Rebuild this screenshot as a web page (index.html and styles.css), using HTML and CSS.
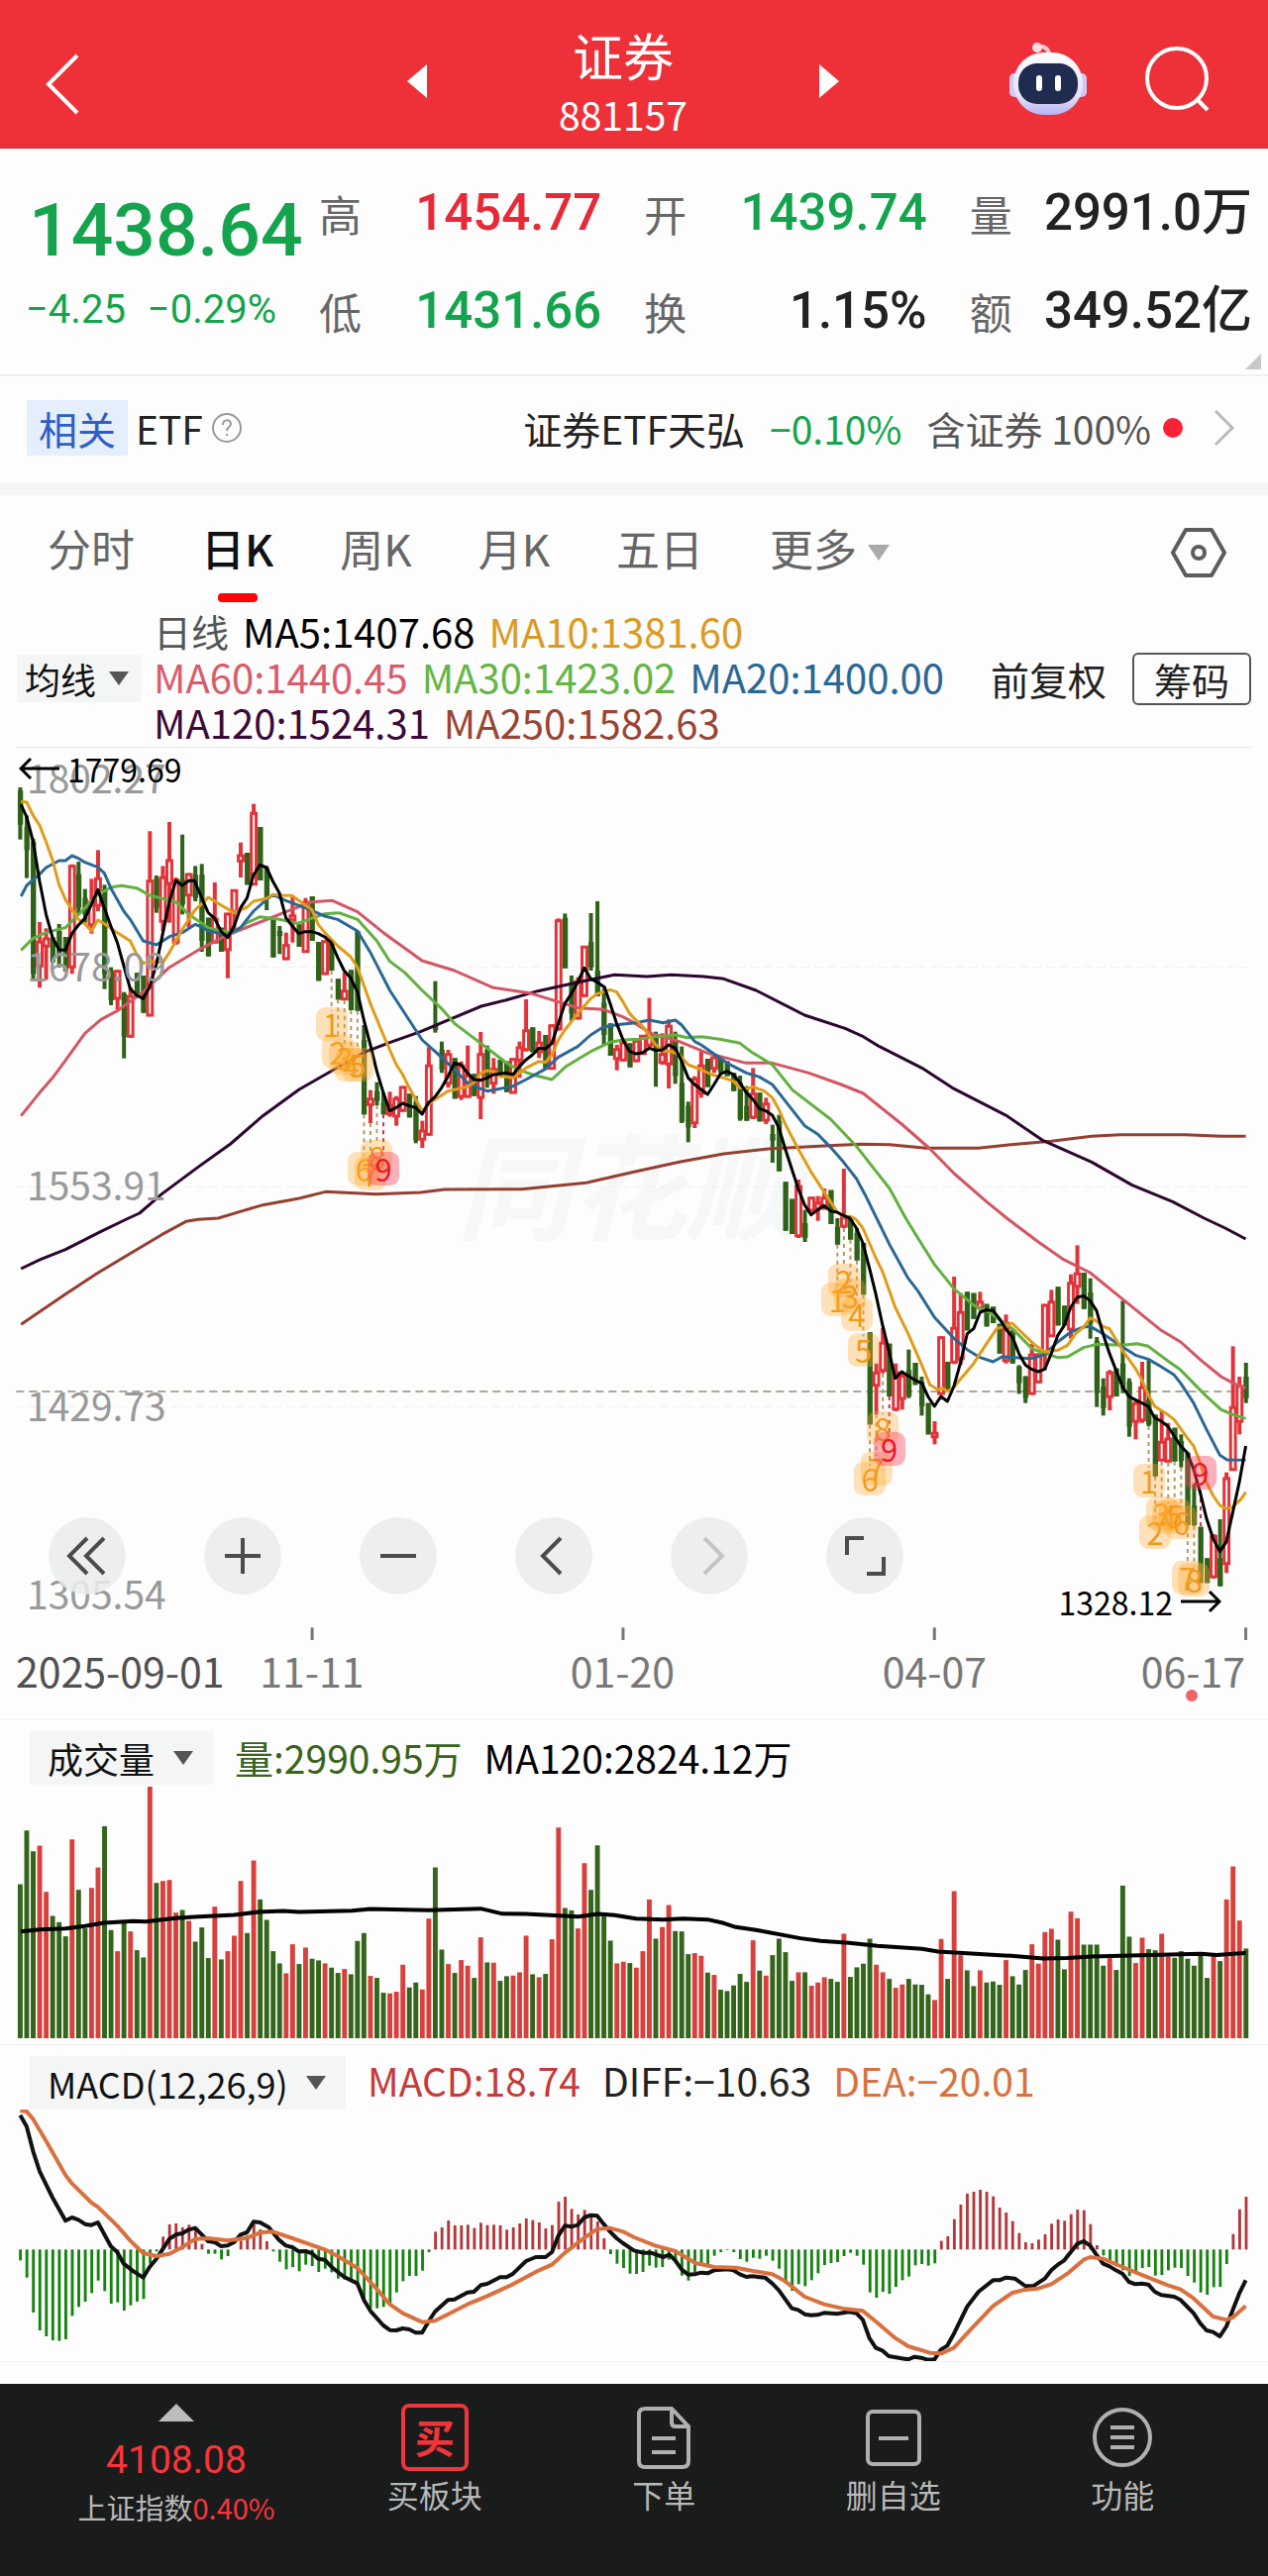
FILE: index.html
```html
<!DOCTYPE html>
<html lang="zh-CN">
<head>
    <meta charset="UTF-8">
    <meta name="viewport" content="width=device-width, initial-scale=1.0">
    <title>证券 881157</title>
    <link rel="stylesheet" href="styles.css">
</head>
<body>
    <header class="top-bar">
        <button class="icon-btn back" aria-label="返回">
            <svg width="44" height="70" viewBox="0 0 44 70"><path d="M42 7 L13 36 L42 65" fill="none" stroke="#fff" stroke-width="4"/></svg>
        </button>
        <div class="title-group">
            <button class="icon-btn" aria-label="上一个">
                <svg width="20" height="34" viewBox="0 0 20 34"><path d="M20 0V34L0 17Z" fill="#fff"/></svg>
            </button>
            <div class="title">
                <h1>证券</h1>
                <div class="code">881157</div>
            </div>
            <button class="icon-btn" aria-label="下一个">
                <svg width="20" height="34" viewBox="0 0 20 34"><path d="M0 0V34L20 17Z" fill="#fff"/></svg>
            </button>
        </div>
        <div class="top-actions">
            <button class="icon-btn" aria-label="智能助手">
                <svg width="80" height="76" viewBox="0 0 80 76">
                    <defs>
                        <linearGradient id="shell" x1="0" y1="0" x2="0" y2="1">
                            <stop offset="0" stop-color="#fff"/>
                            <stop offset=".7" stop-color="#e6e0fb"/>
                            <stop offset="1" stop-color="#b7b2f2"/>
                        </linearGradient>
                    </defs>
                    <path d="M41 14C41 7 36 4 29 5" fill="none" stroke="#f7c9d6" stroke-width="4"/>
                    <circle cx="29" cy="6" r="5" fill="#fbdde4"/>
                    <rect x="1" y="32" width="12" height="24" rx="5" fill="#cfc9f6"/>
                    <rect x="67" y="32" width="12" height="24" rx="5" fill="#cfc9f6"/>
                    <rect x="5" y="11" width="70" height="63" rx="31" fill="url(#shell)"/>
                    <rect x="10" y="22" width="60" height="41" rx="19" fill="#1f2c4f"/>
                    <rect x="28" y="34" width="6" height="16" rx="3" fill="#fff"/>
                    <rect x="47" y="34" width="6" height="16" rx="3" fill="#fff"/>
                </svg>
            </button>
            <button class="icon-btn" aria-label="搜索">
                <svg width="68" height="68" viewBox="0 0 68 68"><circle cx="34" cy="33" r="30" fill="none" stroke="#fff" stroke-width="4"/><path d="M54 54L65 65" stroke="#fff" stroke-width="4"/></svg>
            </button>
        </div>
    </header>

    <section class="quote">
        <div class="price-block">
            <div class="price">1438.64</div>
            <div class="change"><span>−4.25</span><span>−0.29%</span></div>
        </div>
        <dl class="stats">
            <div class="stat"><dt>高</dt><dd class="up">1454.77</dd></div>
            <div class="stat"><dt>开</dt><dd class="down">1439.74</dd></div>
            <div class="stat"><dt>量</dt><dd>2991.0万</dd></div>
            <div class="stat"><dt>低</dt><dd class="down">1431.66</dd></div>
            <div class="stat"><dt>换</dt><dd>1.15%</dd></div>
            <div class="stat"><dt>额</dt><dd>349.52亿</dd></div>
        </dl>
        <svg class="corner" width="16" height="16" viewBox="0 0 16 16"><path d="M16 0V16H0Z" fill="#c8c8c8"/></svg>
    </section>

    <a class="related" href="#etf">
        <span class="chip">相关</span>
        <span>ETF</span>
        <svg class="help" width="32" height="32" viewBox="0 0 32 32" fill="none" stroke="#999" stroke-width="2"><circle cx="16" cy="16" r="14"/><path d="M12 13C12 7 20 7 20 12C20 15 16 15 16 19M16 22V24"/></svg>
        <span class="etf-name">证券ETF天弘</span>
        <span class="etf-change down">−0.10%</span>
        <span class="etf-weight">含证券 100%</span>
        <i class="dot"></i>
        <svg class="more" width="22" height="38" viewBox="0 0 22 38"><path d="M2 2L19 19L2 36" fill="none" stroke="#bbb" stroke-width="3"/></svg>
    </a>

    <nav class="tabs">
        <button>分时</button>
        <button class="active">日K</button>
        <button>周K</button>
        <button>月K</button>
        <button>五日</button>
        <button>更多<svg width="22" height="16" viewBox="0 0 22 16"><path d="M0 0H22L11 16Z" fill="#aaa"/></svg></button>
        <button class="settings" aria-label="设置">
            <svg width="56" height="50" viewBox="0 0 56 50" fill="none" stroke="#5c5c5c" stroke-width="4"><path d="M15 2H41L54 25L41 48H15L2 25Z" stroke-linejoin="round"/><circle cx="28" cy="25" r="6"/></svg>
        </button>
    </nav>

    <section class="ma-row">
        <label class="picker">
            <select aria-label="主图指标"><option>均线</option></select>
            <svg width="20" height="14" viewBox="0 0 20 14"><path d="M0 0H20L10 14Z" fill="#555"/></svg>
        </label>
        <div class="legend">
            <span class="period">日线</span>
            <span class="ma5">MA5:1407.68</span>
            <span class="ma10">MA10:1381.60</span>
            <span class="ma60">MA60:1440.45</span>
            <span class="ma30">MA30:1423.02</span>
            <span class="ma20">MA20:1400.00</span>
            <span class="ma120">MA120:1524.31</span>
            <span class="ma250">MA250:1582.63</span>
        </div>
        <button class="adjust">前复权</button>
        <button class="chips">筹码</button>
    </section>

    <section class="price-chart">
        <div class="watermark">同花顺</div>
        <svg class="plot" id="price-plot" viewBox="0 12 3136 2706" preserveAspectRatio="none"></svg>
        <div class="markers" id="markers"></div>
        <span class="scale s1">1802.27</span>
        <span class="scale s2">1678.09</span>
        <span class="scale s3">1553.91</span>
        <span class="scale s4">1429.73</span>
        <span class="scale s5">1305.54</span>
        <span class="extreme high"><svg width="41" height="24" viewBox="0 0 41 24"><path d="M41 12H2M12 2L2 12L12 22" fill="none" stroke="#000" stroke-width="3"/></svg>1779.69</span>
        <span class="extreme low">1328.12<svg width="41" height="24" viewBox="0 0 41 24"><path d="M0 12H39M29 2L39 12L29 22" fill="none" stroke="#000" stroke-width="3"/></svg></span>
        <div class="chart-tools">
            <button aria-label="快速后退"><svg viewBox="0 0 78 78"><path d="M39 21L21 39L39 57M56 21L38 39L56 57"/></svg></button>
            <button aria-label="放大"><svg viewBox="0 0 78 78"><path d="M39 21V57M21 39H57"/></svg></button>
            <button aria-label="缩小"><svg viewBox="0 0 78 78"><path d="M21 39H57"/></svg></button>
            <button aria-label="左移"><svg viewBox="0 0 78 78"><path d="M46 21L28 39L46 57"/></svg></button>
            <button aria-label="右移" disabled><svg viewBox="0 0 78 78"><path d="M34 21L52 39L34 57"/></svg></button>
            <button aria-label="全屏"><svg viewBox="0 0 78 78"><path d="M21 38V21H38M41 57H58V40"/></svg></button>
        </div>
    </section>
    <div class="dates">
        <span class="first">2025-09-01</span>
        <span class="d1">11-11</span>
        <span class="d2">01-20</span>
        <span class="d3">04-07</span>
        <span class="last">06-17</span>
        <i class="event"></i>
    </div>

    <section class="sub-chart">
        <div class="sub-head">
            <label class="picker">
                <select aria-label="副图指标一"><option>成交量</option></select>
                <svg width="20" height="14" viewBox="0 0 20 14"><path d="M0 0H20L10 14Z" fill="#555"/></svg>
            </label>
            <span class="vol">量:2990.95万</span>
            <span class="ma5">MA120:2824.12万</span>
        </div>
        <svg class="plot" id="volume-plot" viewBox="0 216 3136 769" preserveAspectRatio="none"></svg>
    </section>

    <section class="sub-chart macd">
        <div class="sub-head">
            <label class="picker">
                <select aria-label="副图指标二"><option>MACD(12,26,9)</option></select>
                <svg width="20" height="14" viewBox="0 0 20 14"><path d="M0 0H20L10 14Z" fill="#555"/></svg>
            </label>
            <span class="macd-value">MACD:18.74</span>
            <span class="diff">DIFF:−10.63</span>
            <span class="dea">DEA:−20.01</span>
        </div>
        <svg class="plot" id="macd-plot" viewBox="0 213 3136 762" preserveAspectRatio="none"></svg>
    </section>

    <footer class="bottom-bar">
        <button class="index">
            <svg width="36" height="18" viewBox="0 0 36 18"><path d="M18 0L36 18H0Z" fill="#bdbdbd"/></svg>
            <span class="index-value">4108.08</span>
            <span class="index-name">上证指数<b>0.40%</b></span>
        </button>
        <button class="item buy">
            <span class="buy-icon">买</span>
            <span>买板块</span>
        </button>
        <button class="item">
            <svg width="68" height="68" viewBox="0 0 68 68" fill="none" stroke="#b0b0b0" stroke-width="4"><path d="M14 5H42L59 23V58Q59 64 53 64H15Q9 64 9 58V11Q9 5 15 5M42 5V19Q42 23 46 23H59M22 35H46M22 49H46"/></svg>
            <span>下单</span>
        </button>
        <button class="item">
            <svg width="68" height="68" viewBox="0 0 68 68" fill="none" stroke="#b0b0b0" stroke-width="4"><rect x="8" y="8" width="52" height="53" rx="5"/><path d="M19 35H49"/></svg>
            <span>删自选</span>
        </button>
        <button class="item">
            <svg width="68" height="68" viewBox="0 0 68 68" fill="none" stroke="#b0b0b0" stroke-width="4"><circle cx="34" cy="34" r="28"/><path d="M22 24H46M22 34H46M22 44H46"/></svg>
            <span>功能</span>
        </button>
    </footer>

    <script src="charts.js"></script>
</body>
</html>
```
FILE: styles.css
```css
body {
    margin: 0;
    background: #fdfdfd;
    color: #222;
    font-family: "Noto Sans CJK SC", sans-serif;
}

button {
    margin: 0;
    padding: 0;
    border: 0;
    background: none;
    color: inherit;
    font: inherit;
}

svg {
    display: block;
    flex-shrink: 0;
}

.up {
    color: #e62a37;
}

.down {
    color: #14a44d;
}

/* header */
.top-bar {
    display: grid;
    grid-template-columns: 1fr auto 1fr;
    align-items: center;
    height: 150px;
    padding: 0 58px 0 36px;
    box-sizing: border-box;
    background: #ee3038;
    border-bottom: 1px solid #c8282f;
    color: #fff;
}

.back {
    justify-self: start;
    padding-top: 18px;
}

.title-group {
    display: flex;
    align-items: center;
    gap: 126px;
}

.title-group .icon-btn {
    padding-top: 14px;
}

.title {
    width: 144px;
    padding-top: 12px;
    text-align: center;
}

.title h1 {
    margin: 0;
    font-size: 51px;
    line-height: 68px;
    font-weight: 400;
}

.title .code {
    font-size: 39px;
    line-height: 52px;
}

.top-actions {
    display: flex;
    justify-self: end;
    align-items: center;
    gap: 56px;
    padding-top: 10px;
}

/* quote */
.quote {
    position: relative;
    display: flex;
    height: 230px;
    padding: 15px 16px 0 26px;
    box-sizing: border-box;
    border-bottom: 2px solid #eef0f0;
}

.price-block {
    width: 296px;
    flex-shrink: 0;
    padding-top: 27px;
    font-family: Roboto, "Noto Sans CJK SC", sans-serif;
    color: #14a44d;
    white-space: nowrap;
}

.price {
    padding-left: 3px;
    font-size: 75px;
    line-height: 80px;
    font-weight: 500;
}

.change {
    display: flex;
    gap: 22px;
    font-size: 40px;
    line-height: 82px;
}

.stats {
    display: grid;
    flex: 1;
    grid-template-columns: repeat(3, 1fr);
    grid-auto-rows: 99px;
    column-gap: 43px;
    margin: 0;
}

.stat {
    display: flex;
    justify-content: space-between;
    align-items: center;
    line-height: 94px;
    white-space: nowrap;
}

.stat dt {
    font-size: 43px;
    color: #666;
}

.stat dd {
    margin: 0;
    font-family: Roboto, "Noto Sans CJK SC", sans-serif;
    font-size: 51px;
    font-weight: 500;
}

.corner {
    position: absolute;
    right: 7px;
    bottom: 5px;
}

/* related ETF */
.related {
    display: flex;
    align-items: center;
    height: 120px;
    padding: 0 33px 4px 27px;
    box-sizing: border-box;
    border-bottom: 13px solid #f5f7f7;
    font-size: 39px;
    color: #222;
    text-decoration: none;
    white-space: nowrap;
}

.chip {
    margin-right: 8px;
    padding: 0 12px;
    background: #e5eefc;
    color: #2f5ec4;
    line-height: 56px;
}

.help {
    margin-left: 8px;
}

.etf-name {
    margin-left: auto;
}

.etf-change {
    margin: 0 25px;
}

.etf-weight {
    color: #555;
}

.dot {
    width: 20px;
    height: 20px;
    margin: 0 31px 0 12px;
    border-radius: 50%;
    background: #fb2236;
}

/* period tabs */
.tabs {
    display: flex;
    align-items: center;
    gap: 67px;
    height: 116px;
    padding: 0 42px 0 48px;
    font-size: 44px;
    line-height: 106px;
    color: #666;
}

.tabs button {
    position: relative;
    display: flex;
    align-items: flex-start;
    height: 100%;
    white-space: nowrap;
}

.tabs button svg {
    align-self: center;
    margin-left: 11px;
}

.tabs .active {
    color: #111;
    font-weight: 500;
}

.tabs .active::after {
    content: "";
    position: absolute;
    left: 50%;
    bottom: 8px;
    width: 40px;
    height: 9px;
    margin-left: -20px;
    border-radius: 4px;
    background: #fb0507;
}

.tabs .settings {
    margin-left: auto;
}

/* moving average legend */
.ma-row {
    display: flex;
    align-items: center;
    height: 138px;
    padding: 0 17px;
    white-space: nowrap;
}

.picker {
    display: flex;
    align-items: center;
    gap: 12px;
    height: 48px;
    padding: 0 12px 0 8px;
    background: #f4f6f6;
}

.picker select {
    padding: 0;
    border: 0;
    appearance: none;
    background: none;
    color: #111;
    font: inherit;
    font-size: 36px;
}

.legend {
    display: flex;
    flex: 1;
    flex-wrap: wrap;
    column-gap: 14px;
    margin: 0 14px 4px 13px;
    font-size: 40px;
    line-height: 46px;
}

.period {
    font-size: 38px;
    color: #555;
}

.ma5 { color: #000; }
.ma10 { color: #dc9a20; }
.ma20 { color: #2a6896; }
.ma30 { color: #66b545; }
.ma60 { color: #d95c6c; }
.ma120 { color: #3a0a38; }
.ma250 { color: #9a4434; }

.adjust {
    margin-right: 26px;
    font-size: 39px;
}

.chips {
    height: 53px;
    padding: 0 20px;
    border: 2px solid #555;
    border-radius: 6px;
    font-size: 38px;
    line-height: 49px;
}

/* charts */
.plot {
    position: relative;
    width: 100%;
}

.plot * {
    vector-effect: non-scaling-stroke;
}

.plot polyline {
    fill: none;
    stroke-width: 3px;
    stroke-linejoin: round;
}

.price-chart {
    position: relative;
    height: 902px;
    overflow: hidden;
}

.price-chart .plot {
    height: 902px;
}

.watermark {
    position: absolute;
    left: 36%;
    top: 354px;
    font-size: 116px;
    font-weight: 700;
    font-style: italic;
    color: #f6f8f8;
}

.scale {
    position: absolute;
    left: 27px;
    font-size: 39px;
    line-height: 40px;
    color: #999;
}

.s1 { top: 10px; }
.s2 { top: 200px; }
.s3 { top: 421px; }
.s4 { top: 644px; }
.s5 { top: 834px; }

.extreme {
    position: absolute;
    display: flex;
    align-items: center;
    gap: 8px;
    font-size: 32px;
    line-height: 32px;
    color: #000;
}

.extreme.high {
    left: 19px;
    top: 6px;
}

.extreme.low {
    right: 47px;
    top: 847px;
}

.markers {
    position: absolute;
    inset: 0;
}

.marker {
    position: absolute;
    width: 32px;
    height: 34px;
    border-radius: 9px;
    background: rgba(255, 170, 50, .34);
    color: #ee9a1c;
    font-size: 31px;
    line-height: 34px;
    text-align: center;
    transform: translate(-50%, -50%);
}

.marker.nine {
    background: rgba(250, 70, 90, .42);
    color: #e8172c;
}

.chart-tools {
    position: absolute;
    left: 49px;
    top: 778px;
    display: flex;
    gap: 79px;
}

.chart-tools button {
    width: 78px;
    height: 78px;
    border-radius: 50%;
    background: rgba(234, 236, 236, .86);
}

.chart-tools path {
    fill: none;
    stroke: #4c4c4c;
    stroke-width: 4px;
}

.chart-tools button:disabled path {
    stroke: #c4c4c4;
}

.dates {
    position: relative;
    height: 81px;
    box-sizing: border-box;
    border-bottom: 1px solid #f3f5f5;
    font-size: 41px;
    line-height: 60px;
    color: #777;
}

.dates span {
    position: absolute;
    top: 0;
    transform: translateX(-50%);
}

.dates .first,
.dates .last {
    transform: none;
}

.dates .first { left: 16px; color: #505050; }
.d1 { left: 24.6%; }
.d2 { left: 49.1%; }
.d3 { left: 73.7%; }
.dates .last { right: 23px; }

.event {
    position: absolute;
    left: 94%;
    top: 50px;
    width: 12px;
    height: 12px;
    margin-left: -6px;
    border-radius: 50%;
    background: #f26166;
}

.sub-chart {
    padding-bottom: 6px;
    border-bottom: 1px solid #f0f0f0;
}

.sub-head {
    display: flex;
    align-items: flex-end;
    gap: 22px;
    height: 65px;
    padding-left: 30px;
    font-size: 39px;
    line-height: 56px;
    white-space: nowrap;
}

.sub-head .picker {
    gap: 18px;
    height: 54px;
    padding: 0 20px 0 18px;
}

.sub-chart .plot {
    height: 256px;
}

.sub-chart .plot polyline {
    stroke-width: 4px;
}

.macd {
    padding-bottom: 0;
}

.macd .sub-head {
    line-height: 60px;
}

.macd .plot {
    height: 254px;
}

.vol { color: #38641a; }
.macd-value { color: #c63a3a; }
.diff { color: #222; }
.dea { color: #d9713f; }

/* bottom bar */
.bottom-bar {
    display: grid;
    grid-template-columns: 323px repeat(4, 1fr);
    height: 194px;
    margin-top: 22px;
    padding-right: 31px;
    background: #1a1b1b;
    color: #b8b8b8;
}

.bottom-bar button {
    display: flex;
    flex-direction: column;
    align-items: center;
    justify-content: flex-start;
    padding-top: 20px;
    white-space: nowrap;
}

.bottom-bar .index {
    padding-left: 33px;
}

.index-value {
    margin-top: 13px;
    font-family: Roboto, sans-serif;
    font-size: 39px;
    line-height: 52px;
    font-weight: 400;
    color: #fb343c;
}

.index-name {
    font-size: 29px;
    line-height: 42px;
}

.index-name b {
    font-weight: 400;
    color: #fb343c;
}

.item {
    font-size: 32px;
    line-height: 46px;
}

.buy-icon {
    width: 68px;
    height: 68px;
    box-sizing: border-box;
    border: 4px solid #f0353c;
    border-radius: 8px;
    color: #f0353c;
    font-size: 40px;
    line-height: 58px;
    font-weight: 700;
}
```
FILE: charts.js
```js
var STEP = 16.04;
var FIRST = 50;
var UP = "#e0343a";
var DOWN = "#2f6218";

// volume bars: u = up day, d = down day, then the top of the bar
var volume = ("d518 d355 d418 u401 u541 d614 d633 d676 u382 d535 d652 u529 u467 d342 d657 u721 d627 u661 d718 d740 " +
    "u222 d514 u508 u505 u604 d596 u629 d692 d649 d742 u586 d746 u721 u674 u508 d666 u446 d564 d626 d721 " +
    "d758 u788 u700 d760 u710 d744 d749 u758 d771 d787 u775 d791 d690 d666 u796 d802 d847 u849 u844 u762 " +
    "d831 d816 u837 u622 d467 d716 u760 d787 u748 u765 d802 u679 d755 u756 d811 d797 u795 u785 u674 d791 " +
    "u800 d790 u685 u346 d590 d597 u652 u454 d535 d400 d610 d689 u758 u753 d757 u771 u721 u564 d683 u648 " +
    "u581 d660 d661 d730 u727 u735 d786 u793 d838 d842 d825 d790 d814 u688 d780 u795 d733 d683 d724 d811 " +
    "u785 d785 u826 u816 u800 d805 d814 u668 d799 d770 d759 d683 u762 u785 d805 u832 u822 d805 d822 d823 " +
    "d852 u869 u684 d805 u539 u733 d779 d827 u779 d816 d813 d823 u748 d797 d822 d778 u700 u759 u663 u653 " +
    "d686 d776 u601 u621 d701 d701 d701 d765 u742 d778 d522 d677 u757 u680 d715 d718 u668 u737 d741 d721 " +
    "d744 d765 d735 d802 u728 d751 u564 u464 u628 d713").split(" ");

// candles: high, low, body top, body bottom (body omitted when there is no shadow)
var candles = ("135,293,145,248 220,410,255,325 290,718,300,700 543,742,600,680 562,718,590,620 590,665 549,680,570,640 588,692 368,700,370,683 360,520,398,500 " +
    "443,545,470,520 412,578,480,555 325,510,408,497 430,746,445,700 680,795,690,780 688,808,688,778 755,956,760,890 740,893,765,893 697,770 705,818 " +
    "268,829,415,829 402,515,410,500 373,570,405,545 240,545,353,430 408,612,412,608 278,520,415,490 395,560,395,465 373,480,400,470 367,633,400,600 530,647 " +
    "423,608,530,608 560,633 515,713,515,630 444,570,444,515 302,408,338,362 333,430 185,432,210,432 255,417 373,507,380,470 535,650 " +
    "555,640,570,585 575,658,610,658 462,605,520,540 550,618 470,636,480,636 465,600 603,721 598,703 600,690 715,778 " +
    "695,780,748,780 688,810 570,812 855,1126,900,1126 1052,1152,1075,1100 1028,1098,1055,1085 1060,1126,1088,1126 1057,1133,1095,1128 1070,1160,1075,1135 1040,1118 " +
    "1063,1135 1070,1213,1090,1205 1145,1227,1172,1205 922,1190,975,1190 722,878,855,870 905,1000,930,990 930,1045,940,1035 955,1078 965,1082,975,1075 917,1075,1005,1075 " +
    "1003,1070 876,1140,940,1078 917,1045,930,1010 955,1063,985,1035 960,1010 965,1058 955,1063 905,1015,920,965 777,935,868,933 862,937 " +
    "873,955,905,940 885,990 853,990 532,872,535,870 517,683,530,683 705,842,730,820 710,838,720,838 615,770 516,690,603,680 480,768,690,768 " +
    "745,915,787,885 850,948 915,992,925,960 905,965 910,983 900,967 885,945 773,925,880,920 875,1042,890,935 880,975,940,972 " +
    "838,1047,855,977 875,1033,900,1010 920,1152,1030,1148 1087,1210,1100,1165 1010,1167,1015,1155 935,1075,975,1065 957,1043 942,1000,950,990 957,1000 965,1010 " +
    "1000,1055 1008,1145,1030,1140 1040,1145,1100,1145 985,1140,1060,1138 1060,1147 1075,1155,1090,1147 1157,1272,1185,1205 1127,1298,1145,1298 1330,1478 1382,1488 " +
    "1323,1500,1340,1497 1415,1512,1455,1500 1375,1420 1373,1448,1390,1415 1350,1415,1375,1410 1355,1458 1440,1520,1467,1520 1290,1470,1435,1468 1440,1505 1470,1568,1485,1568 " +
    "1515,1672 1786,2065 1880,2035,1905,1950 1772,1910,1815,1905 1820,1980 1880,2025,1905,2022 1905,2020,1915,1990 1838,1985,1900,1980 1878,1945 1920,2038,1935,2010 " +
    "2000,2095 2055,2125,2088,2106 1798,1975 1875,1965 1617,1882,1770,1880 1667,1885,1722,1870 1663,1780 1667,1745 1663,1720,1690,1715 1700,1768 " +
    "1708,1758 1760,1850 1732,1880,1755,1875 1780,1880 1885,1972,1890,1940 1918,2000,1920,1985 1820,1975,1850,1975 1850,1940 1700,1900,1700,1850 1657,1800,1690,1800 " +
    "1648,1765 1705,1765 1610,1805,1633,1780 1522,1700,1605,1650 1605,1715 1622,1805,1665,1760 1800,2012,1812,1970 1925,2038,1950,2015 1900,2022,1905,1985 1895,1980 " +
    "1690,1970,1880,1955 1925,2102,1935,2072 1990,2110,1998,2060 1875,2060,1950,2055 1870,2070,1990,2065 2035,2222 2025,2177,2115,2177 2060,2180,2105,2180 2075,2177 2095,2195,2115,2175 " +
    "2150,2370 2245,2372,2310,2370 2375,2545 2470,2545 2397,2532,2400,2530 2352,2555,2470,2555 2210,2515,2225,2490 1828,2205,2010,2205 1920,2095,1945,2060 1878,2000,1920,1985").split(" ");

var averages = {
    "#943f30": "52,1762 160,1672 240,1607 400,1490 460,1450 490,1444 540,1440 600,1418 650,1400 740,1380 805,1360 930,1367 1040,1362 1100,1353 1290,1352 1450,1333 1568,1300 1680,1270 1790,1245 1900,1230 2050,1220 2130,1216 2200,1217 2290,1228 2420,1228 2500,1217 2600,1207 2700,1192 2770,1187 2930,1187 3020,1192 3081,1192",
    "#2c0630": "52,1593 100,1565 162,1535 250,1480 318,1440 345,1425 400,1367 490,1285 570,1215 650,1130 740,1050 830,987 900,938 964,908 1040,875 1190,798 1250,780 1330,752 1430,725 1520,703 1600,708 1660,703 1740,708 1790,715 1870,750 1990,825 2090,865 2135,890 2175,920 2280,985 2355,1045 2490,1130 2580,1205 2700,1270 2800,1340 2900,1390 2978,1440 3030,1470 3081,1503",
    "#d45564": "52,1130 98,1060 130,1015 162,962 210,880 250,838 290,812 354,755 419,680 499,622 563,582 650,540 707,512 771,482 822,478 884,512 948,575 1044,660 1124,690 1220,742 1310,758 1381,785 1430,803 1493,808 1540,830 1568,848 1610,880 1680,905 1750,940 1845,970 1910,970 2000,1000 2080,1035 2135,1062 2230,1155 2300,1230 2360,1305 2440,1390 2490,1440 2568,1512 2630,1565 2696,1605 2776,1685 2872,1780 2920,1815 2970,1870 3020,1920 3050,1940 3081,1955",
    "#63b03f": "52,628 82,592 114,575 162,560 194,520 242,460 274,438 300,433 338,440 370,462 403,472 435,482 467,520 515,560 547,570 579,575 611,545 643,527 691,535 735,547 803,518 838,515 884,535 932,600 964,662 1000,695 1044,750 1092,805 1124,850 1205,925 1253,970 1285,992 1325,1008 1365,1020 1400,980 1461,935 1509,907 1541,900 1580,898 1620,890 1670,885 1700,893 1735,890 1780,898 1830,910 1860,938 1910,975 1960,1052 2054,1140 2120,1225 2168,1300 2200,1350 2240,1440 2270,1500 2311,1580 2360,1655 2410,1705 2450,1728 2504,1775 2552,1835 2584,1850 2616,1862 2640,1860 2680,1832 2712,1822 2776,1825 2812,1820 2840,1828 2888,1872 2920,1900 2980,1975 3020,2020 3050,2035 3081,2047",
    "#2a6896": "52,465 66,432 98,398 114,378 146,357 162,357 178,342 194,350 210,362 242,377 258,395 274,440 306,510 322,535 354,600 387,612 403,600 419,587 451,575 483,550 499,558 515,570 563,582 595,560 627,510 659,475 675,460 707,478 755,500 803,525 835,535 884,570 916,635 964,750 996,810 1044,900 1076,935 1124,990 1156,1030 1189,1048 1205,1055 1237,1048 1269,1040 1301,1020 1349,988 1381,952 1429,920 1461,885 1493,860 1541,852 1573,848 1606,840 1640,848 1670,840 1686,855 1718,905 1734,915 1798,970 1846,1000 1878,1012 1910,1035 1942,1085 1990,1160 2022,1185 2054,1225 2086,1270 2118,1320 2140,1370 2168,1440 2200,1520 2246,1622 2270,1660 2311,1740 2360,1805 2392,1838 2424,1862 2456,1875 2478,1860 2550,1865 2580,1855 2616,1815 2648,1785 2680,1770 2696,1768 2728,1790 2776,1830 2808,1855 2840,1867 2872,1890 2904,1915 2920,1940 2952,2000 2984,2080 3017,2158 3035,2172 3081,2173",
    "#e09c18": "52,178 66,180 82,220 98,250 114,300 130,355 146,430 162,475 178,505 194,535 210,548 226,570 242,537 258,548 290,575 322,600 338,640 354,668 370,662 387,663 403,665 419,635 435,600 451,565 467,535 483,505 499,488 515,468 531,480 547,492 579,515 611,498 627,480 659,472 675,460 691,462 723,463 739,478 755,492 771,505 787,550 803,575 835,615 867,648 884,680 916,790 948,885 964,930 980,975 996,1005 1012,1045 1044,1115 1060,1095 1076,1080 1108,1055 1156,1042 1172,1030 1189,1000 1205,993 1221,995 1237,1010 1269,1015 1301,985 1333,965 1349,968 1365,945 1381,900 1397,870 1429,820 1461,775 1477,760 1509,748 1525,755 1541,785 1557,820 1573,840 1590,860 1622,915 1638,932 1660,935 1680,945 1702,975 1734,990 1760,1005 1790,1015 1814,1025 1830,1045 1846,1048 1862,1042 1890,1055 1910,1075 1926,1110 1942,1155 1974,1230 2006,1300 2038,1360 2070,1420 2086,1435 2104,1435 2118,1445 2134,1470 2166,1560 2182,1600 2214,1710 2246,1790 2278,1880 2300,1945 2320,1960 2330,1955 2345,1965 2360,1950 2408,1880 2440,1820 2465,1775 2490,1765 2503,1758 2530,1790 2560,1825 2584,1845 2616,1840 2640,1825 2660,1790 2680,1770 2696,1742 2710,1750 2728,1768 2744,1775 2776,1840 2808,1895 2824,1930 2840,1975 2856,2010 2888,2035 2904,2050 2936,2105 2952,2130 2968,2180 2984,2240 3000,2280 3017,2310 3033,2320 3049,2315 3070,2290 3081,2270",
    "#000": "52,187 66,225 82,300 98,420 114,520 130,590 146,627 162,628 178,578 194,552 210,532 226,490 242,445 258,500 274,555 290,605 306,675 322,745 338,765 354,775 370,740 387,670 403,575 419,480 435,418 451,432 467,418 481,418 499,470 515,515 531,532 547,572 563,590 579,555 595,500 611,470 627,400 643,370 659,378 675,420 691,455 707,530 723,555 739,578 755,572 771,572 787,578 803,588 819,605 835,650 851,690 867,712 884,755 900,840 916,915 932,995 948,1060 964,1115 980,1105 996,1092 1012,1100 1028,1105 1044,1125 1060,1090 1076,1072 1092,1045 1108,1010 1124,970 1140,975 1156,1000 1172,1020 1189,1022 1205,1015 1221,1005 1253,1000 1269,1005 1285,980 1301,960 1317,945 1333,925 1349,927 1365,910 1381,850 1397,790 1413,760 1429,725 1445,682 1461,715 1477,725 1495,740 1509,790 1525,850 1541,900 1557,935 1573,942 1590,938 1606,925 1622,932 1638,930 1654,915 1670,925 1686,965 1702,1015 1718,1035 1734,1050 1750,1065 1766,1035 1782,1003 1798,995 1814,1005 1830,1030 1846,1060 1862,1080 1878,1108 1894,1115 1910,1128 1926,1165 1942,1230 1958,1290 1974,1350 1990,1400 2006,1430 2022,1415 2038,1402 2054,1418 2070,1422 2086,1432 2102,1440 2118,1470 2134,1515 2150,1590 2166,1670 2182,1760 2198,1840 2214,1925 2230,1905 2246,1918 2262,1930 2280,1940 2295,1980 2311,2010 2327,1980 2343,1995 2359,1950 2375,1880 2392,1790 2408,1775 2424,1725 2440,1718 2456,1720 2472,1745 2490,1780 2504,1800 2520,1850 2536,1885 2552,1898 2568,1905 2584,1897 2600,1850 2616,1795 2632,1765 2648,1710 2664,1680 2680,1675 2696,1690 2712,1720 2728,1790 2744,1850 2760,1900 2776,1950 2792,1980 2808,1990 2824,2000 2840,2010 2856,2045 2872,2055 2888,2070 2904,2100 2920,2130 2936,2150 2952,2200 2968,2270 2984,2350 3000,2410 3017,2450 3033,2420 3049,2330 3065,2240 3081,2130"
};

// nine-turn markers: day index, centre, label
var markers = [
    [48, 852, 1], [49, 935, 2], [50, 955, 3], [51, 975, 4], [52, 975, 5], [53, 1290, 6], [54, 1305, 7], [55, 1255, 8], [56, 1290, 9],
    [126, 1685, 1], [127, 1630, 2], [128, 1675, 3], [129, 1730, 4], [130, 1838, 5], [131, 2230, 6], [132, 2200, 7], [133, 2075, 8], [134, 2140, 9],
    [174, 2235, 1], [175, 2390, 2], [176, 2335, 3], [177, 2345, 4], [178, 2340, 5], [179, 2360, 6], [180, 2530, 7], [181, 2535, 8], [182, 2210, 9]
];

var macd = [670, 722, 828, 882, 900, 912, 914, 909, 838, 811, 795, 769, 731, 763, 801, 797, 822, 806, 795, 787,
    680, 643, 598, 561, 558, 570, 562, 577, 620, 650, 650, 667, 657, 637, 610, 594, 560, 576, 612, 643,
    674, 697, 690, 703, 683, 687, 705, 695, 706, 725, 728, 732, 737, 797, 815, 815, 811, 800, 767, 733,
    717, 717, 701, 645, 583, 570, 549, 564, 564, 562, 572, 556, 563, 562, 564, 577, 570, 558, 543, 548,
    555, 573, 563, 492, 477, 514, 531, 517, 535, 552, 603, 651, 680, 693, 710, 711, 705, 686, 692, 690,
    668, 675, 716, 731, 706, 687, 681, 656, 645, 639, 645, 666, 674, 662, 665, 656, 671, 695, 740, 762,
    742, 748, 730, 709, 684, 678, 675, 657, 647, 656, 683, 767, 783, 765, 771, 750, 730, 719, 685, 681,
    686, 679, 611, 597, 545, 501, 468, 462, 456, 462, 476, 510, 525, 551, 587, 615, 618, 607, 591, 559,
    546, 550, 530, 516, 518, 560, 624, 655, 675, 688, 700, 717, 712, 693, 690, 716, 714, 700, 692, 693,
    717, 737, 767, 774, 751, 750, 681, 590, 515, 477];

var volumeAverage = "52,661 98,655 162,652 210,645 258,635 330,630 360,631 435,621 480,617 579,611 640,602 700,599 740,602 870,598 916,593 1060,597 1189,592 1240,607 1300,608 1430,616 1480,608 1520,612 1573,622 1640,625 1690,622 1750,625 1790,636 1820,648 1870,657 1980,682 2030,690 2100,696 2170,705 2280,714 2320,722 2500,735 2580,743 2640,742 2700,737 2870,732 2970,729 3010,733 3050,729 3081,727";

var diff = "50,230 66,265 82,340 98,400 130,480 162,550 178,540 194,547 210,560 226,563 242,555 274,627 290,645 306,680 330,703 354,722 370,690 387,665 403,635 419,605 435,592 451,588 467,577 483,572 499,592 515,612 531,615 547,627 563,625 579,615 595,592 611,585 627,553 643,555 665,570 690,608 707,625 723,630 739,643 755,642 771,648 787,665 803,668 820,690 851,720 884,740 900,790 916,823 948,867 964,881 980,882 996,876 1012,879 1028,889 1044,889 1060,855 1076,825 1108,790 1124,788 1156,767 1172,765 1189,745 1205,741 1237,721 1253,721 1269,710 1301,672 1325,660 1349,660 1365,645 1381,595 1397,565 1413,568 1429,563 1445,540 1461,533 1477,535 1493,560 1509,583 1525,603 1541,618 1568,640 1590,647 1610,647 1640,660 1656,653 1670,670 1686,698 1702,713 1718,712 1734,707 1750,709 1766,700 1800,697 1814,700 1830,712 1846,720 1860,718 1892,722 1910,740 1926,760 1958,815 1974,820 1990,833 2006,836 2022,835 2038,829 2070,832 2100,826 2118,830 2134,850 2150,905 2166,935 2182,943 2198,960 2230,967 2246,970 2262,962 2278,965 2294,971 2311,970 2327,940 2343,928 2360,890 2392,810 2420,765 2456,730 2472,730 2488,722 2510,725 2535,747 2555,748 2584,725 2600,700 2616,683 2632,670 2648,645 2664,620 2680,612 2696,625 2710,650 2728,680 2744,688 2760,700 2776,710 2792,735 2808,742 2824,740 2840,743 2856,765 2872,775 2904,780 2920,790 2936,810 2952,830 2968,860 2984,882 3000,887 3017,900 3033,870 3049,820 3065,770 3081,730";

var dea = "50,216 66,219 82,242 114,308 162,412 178,437 226,495 242,508 290,565 322,610 354,648 387,657 419,650 451,630 483,605 515,603 563,610 611,602 643,586 675,583 723,603 803,637 835,657 884,693 932,757 964,803 996,830 1044,857 1076,853 1108,833 1156,803 1205,778 1269,742 1333,700 1365,683 1397,647 1445,602 1477,575 1509,572 1541,583 1568,600 1620,625 1670,642 1720,678 1766,690 1820,692 1862,702 1910,712 1942,733 1990,780 2038,803 2090,817 2134,823 2166,855 2214,905 2246,930 2300,950 2327,952 2359,935 2400,880 2456,808 2504,768 2530,760 2568,755 2600,742 2640,710 2680,668 2696,660 2728,665 2776,690 2840,722 2888,745 2920,758 2952,785 3000,840 3033,850 3049,843 3081,808";

function dayX(i) {
    return FIRST + STEP * i;
}

function line(x1, y1, x2, y2, color, width, dash) {
    return '<line x1="' + x1 + '" y1="' + y1 + '" x2="' + x2 + '" y2="' + y2 + '" stroke="' + color +
        '" stroke-width="' + width + '"' + (dash ? ' stroke-dasharray="' + dash + '"' : "") + "/>";
}

function rect(x, y, w, h, style) {
    return '<rect x="' + x + '" y="' + y + '" width="' + w + '" height="' + h + '" ' + style + "/>";
}

function curve(points, color) {
    return '<polyline points="' + points + '" stroke="' + color + '"/>';
}

function drawPrice() {
    var out = line(40, 13, 3096, 13, "#ececec", 2);
    [680, 1345, 2012].forEach(function(y) {
        out += line(40, y, 3096, y, "#efefef", 1, "8 5");
    });
    out += line(40, 1965, 3090, 1965, "#aea699", 2, "8 5");
    candles.forEach(function(candle, i) {
        var v = candle.split(",").map(Number);
        var x = dayX(i);
        var up = volume[i].charAt(0) === "u";
        var top = v.length > 2 ? v[2] : v[0];
        var bottom = v.length > 2 ? v[3] : v[1];
        out += line(x, v[0], x, v[1], up ? UP : DOWN, 4);
        if (up) {
            out += rect(x - 6, top + 4, 12, Math.max(bottom - top - 8, 2), 'fill="#fff" stroke="' + UP + '" stroke-width="3"');
        } else {
            out += rect(x - 6, top, 13, bottom - top, 'fill="' + DOWN + '"');
        }
    });
    // leader from the candle to its marker, below or above
    markers.forEach(function(m) {
        var v = candles[m[0]].split(",").map(Number);
        var x = dayX(m[0]);
        var color = m[2] === 9 ? "#c43245" : "#b59a62";
        if (m[1] > v[1] + 40) {
            out += line(x, v[1], x, m[1] - 40, color, 2, "4 4");
        } else if (m[1] < v[0]) {
            out += line(x, m[1] + 55, x, v[0], color, 2, "4 4");
        }
    });
    for (var color in averages) {
        out += curve(averages[color], color);
    }
    [772, 1541, 2311, 3081].forEach(function(x) {
        out += line(x, 2680, x, 2718, "#777", 3);
    });
    document.getElementById("price-plot").innerHTML = out;
}

function drawMarkers() {
    document.getElementById("markers").innerHTML = markers.map(function(m) {
        var left = dayX(m[0]) / 3136 * 100;
        var top = (m[1] - 12) / 2706 * 100;
        return '<span class="marker' + (m[2] === 9 ? " nine" : "") + '" style="left:' + left + "%;top:" + top + '%">' + m[2] + "</span>";
    }).join("");
}

function drawVolume() {
    var out = "";
    volume.forEach(function(bar, i) {
        var top = Number(bar.slice(1));
        var color = bar.charAt(0) === "u" ? "#d8403c" : "#33651a";
        out += rect(dayX(i) - 6, top, 12, 985 - top, 'fill="' + color + '"');
    });
    document.getElementById("volume-plot").innerHTML = out + curve(volumeAverage, "#000");
}

function drawMacd() {
    var out = "";
    macd.forEach(function(y, i) {
        var color = y < 637 ? "#b4383a" : "#16820f";
        out += rect(dayX(i) - 3, Math.min(y, 637), 7, Math.abs(y - 637), 'fill="' + color + '"');
    });
    document.getElementById("macd-plot").innerHTML = out + curve(diff, "#111") + curve(dea, "#d9713f");
}

drawPrice();
drawMarkers();
drawVolume();
drawMacd();
```
